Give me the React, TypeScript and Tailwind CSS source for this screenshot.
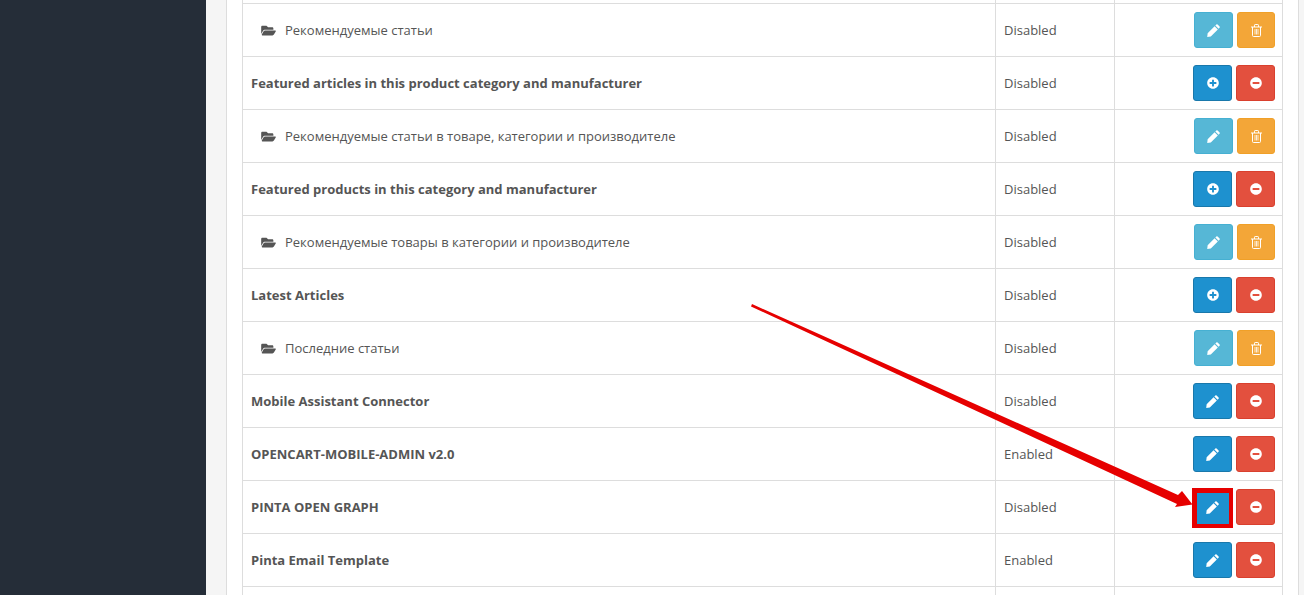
import { FaFolderOpen, FaPlusCircle, FaMinusCircle } from 'react-icons/fa'

type Row = { name: string; status: string; child?: boolean; installed?: boolean }

const rows: Row[] = [
  { name: 'Рекомендуемые статьи', status: 'Disabled', child: true },
  { name: 'Featured articles in this product category and manufacturer', status: 'Disabled' },
  { name: 'Рекомендуемые статьи в товаре, категории и производителе', status: 'Disabled', child: true },
  { name: 'Featured products in this category and manufacturer', status: 'Disabled' },
  { name: 'Рекомендуемые товары в категории и производителе', status: 'Disabled', child: true },
  { name: 'Latest Articles', status: 'Disabled' },
  { name: 'Последние статьи', status: 'Disabled', child: true },
  { name: 'Mobile Assistant Connector', status: 'Disabled', installed: true },
  { name: 'OPENCART-MOBILE-ADMIN v2.0', status: 'Enabled', installed: true },
  { name: 'PINTA OPEN GRAPH', status: 'Disabled', installed: true },
  { name: 'Pinta Email Template', status: 'Enabled', installed: true },
]

function Pencil() {
  return (
    <svg className="w-[13px] h-[13px]" viewBox="0 0 12 12" fill="currentColor">
      <path d="M8.6 0.4a0.9 0.9 0 0 1 1.2 0l1.8 1.8a0.9 0.9 0 0 1 0 1.2l-0.9 0.9-3-3zM7 2l3 3-6.5 6.5-3.3 0.4 0.4-3.4z" />
    </svg>
  )
}

function Trash() {
  return (
    <svg className="w-[11px] h-[13px]" viewBox="0 0 11 13" fill="none" stroke="currentColor" strokeWidth="1">
      <path d="M0 3h11M3.5 3V1.2a0.7 0.7 0 0 1 0.7-0.7h2.6a0.7 0.7 0 0 1 0.7 0.7V3" />
      <path d="M1.5 3v8.5a1 1 0 0 0 1 1h6a1 1 0 0 0 1-1V3" />
      <path d="M4 5v5.5M5.5 5v5.5M7 5v5.5" strokeWidth="0.8" />
    </svg>
  )
}

function Actions({ row }: { row: Row }) {
  if (row.child) {
    return (
      <div className="flex justify-end gap-[4px]">
        <button className="w-[39px] h-[36px] flex items-center justify-center rounded-[3px] border border-[#46b0d2] bg-[#56b7d6] text-white">
          <Pencil />
        </button>
        <button className="w-[38px] h-[36px] flex items-center justify-center rounded-[3px] border border-[#f0a028] bg-[#f3a638] text-white">
          <Trash />
        </button>
      </div>
    )
  }
  return (
    <div className="flex justify-end gap-[4px]">
      <button className="w-[39px] h-[36px] flex items-center justify-center rounded-[3px] border border-[#1978ab] bg-[#1e91cf] text-white">
        {row.installed ? <Pencil /> : <FaPlusCircle className="w-[12px] h-[12px]" />}
      </button>
      <button className="w-[39px] h-[36px] flex items-center justify-center rounded-[3px] border border-[#d9402e] bg-[#e3503e] text-white">
        <FaMinusCircle className="w-[12px] h-[12px]" />
      </button>
    </div>
  )
}

export default function App() {
  return (
    <div className="relative flex h-[595px] overflow-hidden bg-[#f5f5f5] font-['Open_Sans',sans-serif] text-[13px] text-[#555555]">
      <aside className="w-[206px] shrink-0 bg-[#252d38]" />
      <main className="flex-1 pl-[20px] pr-[5px]">
        <div className="h-full border-x border-[#dddddd] bg-white pl-[15px] pr-[15px]">
          <div className="h-[3px] flex border-x border-[#dddddd]">
            <div className="w-[753px] border-r border-[#dddddd]" />
            <div className="w-[119px] border-r border-[#dddddd]" />
          </div>
          <div className="border-x border-t border-[#dddddd]">
            {rows.map((row) => (
              <div key={row.name} className="flex h-[53px] border-b border-[#dddddd]">
                <div className="w-[753px] flex items-center border-r border-[#dddddd] pl-[8px]">
                  {row.child ? (
                    <span className="flex items-center pl-[10px] pt-[2px]">
                      <FaFolderOpen className="w-[15px] h-[13px] mr-[9px] -mt-[2px] text-[#555555]" />
                      {row.name}
                    </span>
                  ) : (
                    <span className="font-bold pt-[2px]">{row.name}</span>
                  )}
                </div>
                <div className="w-[119px] flex items-center border-r border-[#dddddd] pl-[8px] pt-[2px]">{row.status}</div>
                <div className="flex-1 flex items-center justify-end pr-[7px]">
                  <Actions row={row} />
                </div>
              </div>
            ))}
            <div className="flex h-[20px]">
              <div className="w-[753px] border-r border-[#dddddd]" />
              <div className="w-[119px] border-r border-[#dddddd]" />
            </div>
          </div>
        </div>
      </main>
      <div className="absolute left-[1192px] top-[488px] w-[41px] h-[40px] border-t-[5px] border-l-[5px] border-b-[4px] border-r-[4px] border-[#e60000]" />
      <svg className="absolute left-0 top-0 pointer-events-none" width="1304" height="595">
        <polygon points="752,304 1178,495 1182,491 1192.5,504.5 1175,507 1177,504 751,306.5" fill="#e60000" />
      </svg>
    </div>
  )
}
